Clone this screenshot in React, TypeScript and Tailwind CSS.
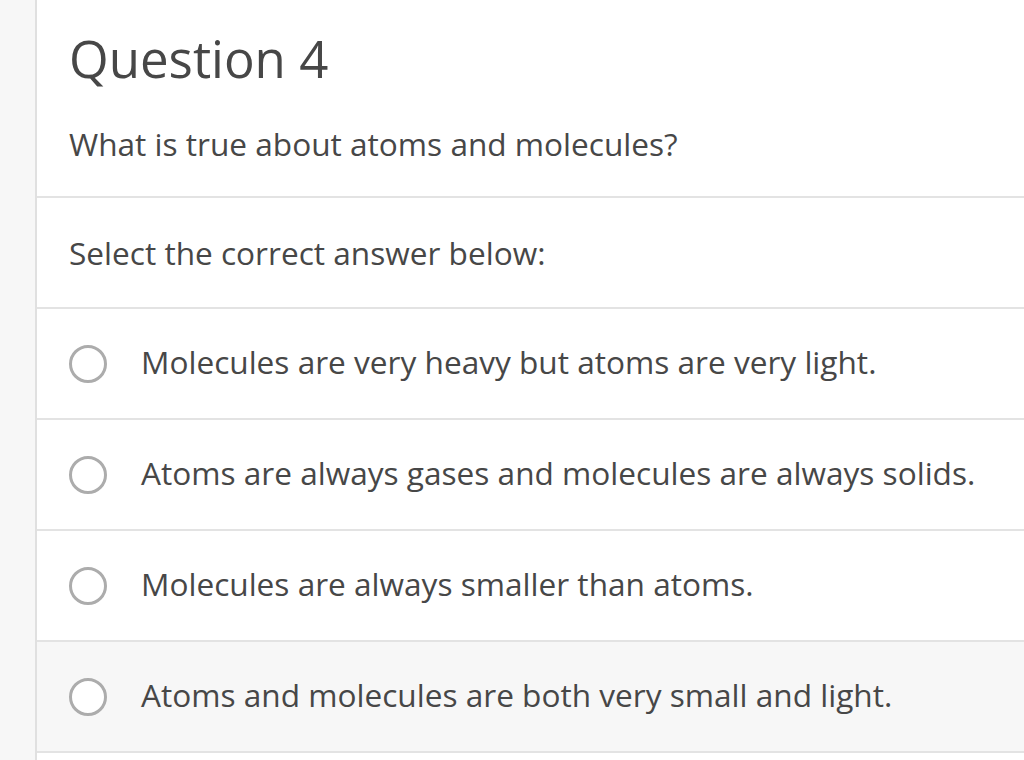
import { useState } from 'react';

const options = [
  'Molecules are very heavy but atoms are very light.',
  'Atoms are always gases and molecules are always solids.',
  'Molecules are always smaller than atoms.',
  'Atoms and molecules are both very small and light.',
];

export default function App() {
  const [hovered] = useState(3);

  return (
    <div className="flex h-[760px] w-[1024px] overflow-hidden bg-white text-[#474747]" style={{ fontFamily: '"Open Sans", "Liberation Sans", sans-serif' }}>
      <div className="w-[37px] shrink-0 border-r-2 border-[#e0e0e0] bg-[#f7f7f7]" />
      <div className="flex-1">
        <div className="h-[198px] border-b-2 border-[#e3e3e3] pl-[32px] pt-[22px]">
          <h1 className="text-[51px] leading-[72px]">Question 4</h1>
          <p className="mt-[29px] text-[31.6px] leading-[42px]">What is true about atoms and molecules?</p>
        </div>
        <div className="flex h-[111px] items-center border-b-2 border-[#e3e3e3] pl-[32px]">
          <p className="text-[31.6px] leading-[42px]">Select the correct answer below:</p>
        </div>
        {options.map((opt, i) => (
          <div
            key={opt}
            className={`flex h-[111px] items-center border-b-2 border-[#e3e3e3] pl-[32px] ${i === hovered ? 'bg-[#f7f7f7]' : 'bg-white'}`}
          >
            <span className="h-[38px] w-[38px] shrink-0 rounded-full border-[3px] border-[#acacac] bg-white" />
            <span className="ml-[34px] -translate-y-[2px] text-[31.6px] leading-[42px]">{opt}</span>
          </div>
        ))}
      </div>
    </div>
  );
}
